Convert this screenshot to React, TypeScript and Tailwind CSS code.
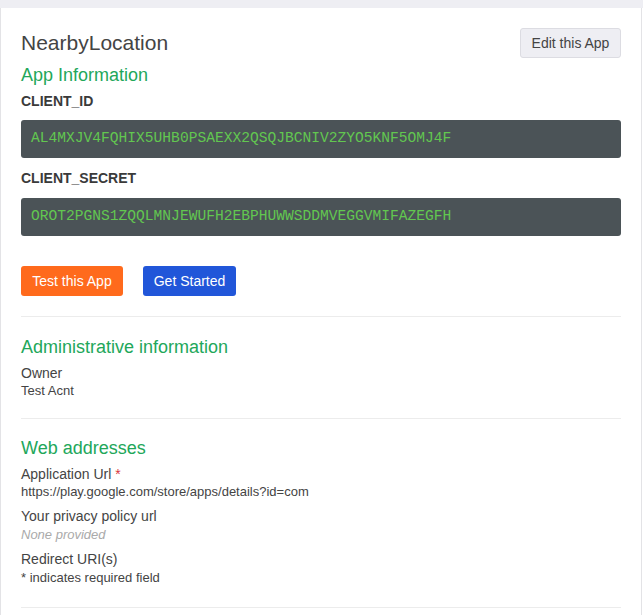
export default function App() {
  const sans = { fontFamily: '"Liberation Sans", Arial, sans-serif' };
  const mono = '"Liberation Mono", "DejaVu Sans Mono", monospace';

  return (
    <div className="min-h-[615px] w-[643px] bg-white" style={sans}>
      <div className="h-[8px] bg-[#eeeef3]" />
      <div className="w-[642px] border-x border-[#e3e3e6] bg-white px-[20px] pt-[20px] pb-[8px]">
        <div className="flex h-[30px] items-center justify-between">
          <h1 className="text-[21px] leading-[24px] text-[#444]">NearbyLocation</h1>
          <button className="h-[30px] w-[101px] rounded-[3px] border border-[#dcdce2] bg-[#eeeef3] text-[14px] text-[#444]">
            Edit this App
          </button>
        </div>

        <h2 className="mt-[7px] text-[18px] leading-[20px] text-[#22a75a]">App Information</h2>
        <div className="mt-[8px] text-[14px] font-bold leading-[16px] text-[#3a3a3a]">CLIENT_ID</div>
        <div
          className="mt-[11px] flex h-[38px] items-center rounded-[3px] bg-[#4b5357] px-[10px] text-[14.6px] text-[#62c750]"
          style={{ fontFamily: mono }}
        >
          AL4MXJV4FQHIX5UHB0PSAEXX2QSQJBCNIV2ZYO5KNF5OMJ4F
        </div>
        <div className="mt-[12px] text-[14px] font-bold leading-[16px] text-[#3a3a3a]">CLIENT_SECRET</div>
        <div
          className="mt-[12px] flex h-[38px] items-center rounded-[3px] bg-[#4b5357] px-[10px] text-[14.6px] text-[#62c750]"
          style={{ fontFamily: mono }}
        >
          OROT2PGNS1ZQQLMNJEWUFH2EBPHUWWSDDMVEGGVMIFAZEGFH
        </div>

        <div className="mt-[30px] flex gap-[20px]">
          <button className="h-[30px] w-[102px] rounded-[3px] bg-[#ff6a1c] text-[14px] text-white">Test this App</button>
          <button className="h-[30px] w-[93px] rounded-[3px] bg-[#2156d9] text-[14px] text-white">Get Started</button>
        </div>

        <div className="mt-[20px] border-t border-[#ececec]" />

        <h2 className="mt-[20px] text-[18px] leading-[20px] text-[#22a75a]">Administrative information</h2>
        <div className="mt-[8px] text-[14px] leading-[16px] text-[#444]">Owner</div>
        <div className="mt-[2px] text-[13px] leading-[15px] text-[#444]">Test Acnt</div>

        <div className="mt-[20px] border-t border-[#ececec]" />

        <h2 className="mt-[19px] text-[18px] leading-[20px] text-[#22a75a]">Web addresses</h2>
        <div className="mt-[8px] text-[14px] leading-[16px] text-[#444]">
          Application Url <span className="text-[#d9363e]">*</span>
        </div>
        <div className="mt-[2px] text-[13px] leading-[15px] text-[#444]">
          https://play.google.com/store/apps/details?id=com
        </div>
        <div className="mt-[9px] text-[14px] leading-[16px] text-[#444]">Your privacy policy url</div>
        <div className="mt-[3px] text-[13px] italic leading-[15px] text-[#aaa]">None provided</div>
        <div className="mt-[9px] text-[14px] leading-[16px] text-[#444]">Redirect URI(s)</div>
        <div className="mt-[3px] text-[13px] leading-[15px] text-[#444]">* indicates required field</div>

        <div className="mt-[22px] border-t border-[#ececec]" />
      </div>
    </div>
  );
}
